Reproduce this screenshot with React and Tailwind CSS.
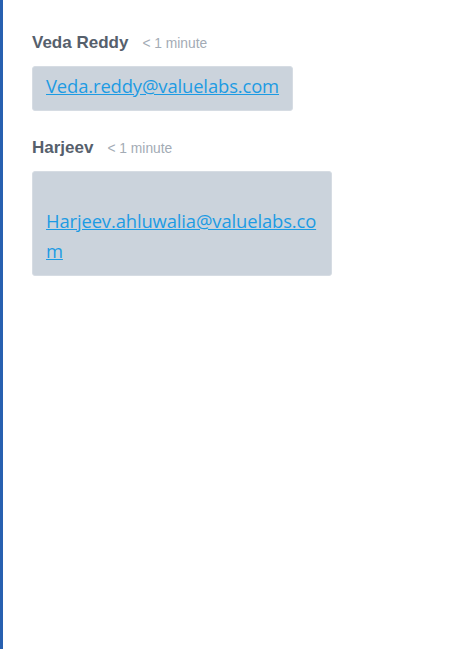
export default function App() {
  const msgs = [
    { name: "Veda Reddy", email: "Veda.reddy@valuelabs.com", br: false },
    { name: "Harjeev", email: "Harjeev.ahluwalia@valuelabs.com", br: true },
  ];
  return (
    <div className="w-[459px] h-[649px] bg-white border-l-[3px] border-[#2760b0] flex flex-col pt-[30px] pl-[29px] gap-[24px]" style={{ fontFamily: '"Liberation Sans", Arial, sans-serif' }}>
      {msgs.map((m) => (
        <div key={m.name} className="flex flex-col items-start gap-[14px]">
          <div className="flex items-baseline gap-[14px] h-[22px]">
            <span className="text-[17px] font-bold text-[#56606c]">{m.name}</span>
            <span className="text-[13.8px] text-[#a3abb5]">&lt; 1 minute</span>
          </div>
          <div className="max-w-[300px] bg-[#cbd3dc] border border-[#d6dce3] rounded-[3px] px-[13px] pt-[4px] pb-[9px] text-[18.4px] tracking-[-0.12px] leading-[30px] break-all" style={{ fontFamily: '"Open Sans", sans-serif' }}>
            {m.br && <br />}
            <a href="#" className="text-[#1d9be3] underline">{m.email}</a>
          </div>
        </div>
      ))}
    </div>
  );
}
